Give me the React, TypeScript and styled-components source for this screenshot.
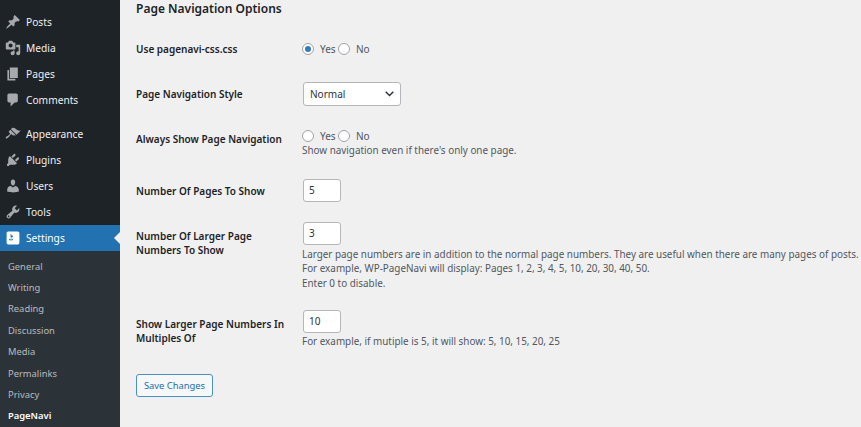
import styled, { createGlobalStyle } from 'styled-components';

const Global = createGlobalStyle`
  html, body { margin: 0; padding: 0; height: 100%; overflow: hidden; background: #f0f0f1; }
  body { font-family: "Noto Sans", "Open Sans", sans-serif; font-size: 10px; color: #3c434a; }
`;

const Page = styled.div`
  display: flex;
  width: 861px;
  height: 427px;
  overflow: hidden;
`;

const Sidebar = styled.nav`
  width: 120px;
  flex: none;
  background: #1d2327;
  padding-top: 9px;
  box-sizing: border-box;
`;

const MenuItem = styled.div<{ $active?: boolean; $gap?: boolean }>`
  position: relative;
  display: flex;
  align-items: center;
  height: 26px;
  margin-top: ${p => (p.$gap ? '8px' : '0')};
  padding-left: 5px;
  color: ${p => (p.$active ? '#fff' : '#f0f0f1')};
  background: ${p => (p.$active ? '#2271b1' : 'transparent')};
  font-size: 10.2px;
  line-height: 24px;

  svg {
    width: 16px;
    height: 16px;
    margin-right: 5px;
    fill: ${p => (p.$active ? '#fff' : '#a7aaad')};
  }
`;

const ActiveArrow = styled.span`
  position: absolute;
  right: 0;
  top: 7px;
  border: 6px solid transparent;
  border-right-color: #f0f0f1;
  border-left-width: 0;
`;

const SubMenu = styled.div`
  background: #2c3338;
  padding-top: 4.6px;
  height: 180px;
`;

const SubItem = styled.div<{ $current?: boolean }>`
  height: 21.4px;
  line-height: 21.4px;
  padding-left: 8px;
  font-size: 9.4px;
  color: ${p => (p.$current ? '#fff' : 'rgba(240, 246, 252, 0.7)')};
  font-weight: ${p => (p.$current ? 600 : 400)};
`;

const Content = styled.main`
  flex: 1;
  min-width: 0;
  padding-left: 16px;
`;

const Heading = styled.h2`
  margin: 0;
  height: 16px;
  line-height: 18px;
  font-size: 12px;
  font-weight: 600;
  color: #1d2327;
`;

const Row = styled.div<{ $top: number }>`
  display: grid;
  grid-template-columns: 166px 1fr;
  margin-top: ${p => p.$top}px;
`;

const Label = styled.div<{ $pad?: number }>`
  padding-top: ${p => p.$pad ?? 0}px;
  font-size: 10px;
  line-height: 14px;
  font-weight: 600;
  color: #1d2327;
  width: 153px;
`;

const Field = styled.div`
  min-width: 0;
  white-space: nowrap;
`;

const RadioLine = styled.div`
  display: flex;
  align-items: center;
  height: 14px;
`;

const Radio = styled.span<{ $checked?: boolean }>`
  width: 12px;
  height: 12px;
  flex: none;
  box-sizing: border-box;
  border: 1px solid #a0a3a7;
  border-radius: 50%;
  background: #fff;
  margin-right: 6px;
  display: flex;
  align-items: center;
  justify-content: center;

  &::after {
    content: '';
    display: ${p => (p.$checked ? 'block' : 'none')};
    width: 6px;
    height: 6px;
    border-radius: 50%;
    background: #2f7dbd;
  }
`;

const RadioText = styled.span<{ $w: number }>`
  width: ${p => p.$w}px;
  color: #50575e;
`;

const Select = styled.div`
  display: flex;
  align-items: center;
  justify-content: space-between;
  box-sizing: border-box;
  width: 98px;
  height: 24px;
  margin-left: 1px;
  padding: 0 6px 0 6px;
  background: #fff;
  border: 1px solid #b4b6b9;
  border-radius: 3px;
  color: #2c3338;

  svg {
    width: 9px;
    height: 6px;
  }
`;

const NumberBox = styled.div`
  box-sizing: border-box;
  width: 38px;
  height: 23px;
  margin-left: 1px;
  padding-left: 5px;
  line-height: 21px;
  background: #fff;
  border: 1px solid #b4b6b9;
  border-radius: 3px;
  color: #2c3338;
`;

const Help = styled.div<{ $top?: number }>`
  margin-top: ${p => p.$top ?? 0}px;
  font-size: 9.9px;
  line-height: 14.7px;
  color: #50575e;
`;

const SaveButton = styled.button`
  display: block;
  box-sizing: border-box;
  width: 77px;
  height: 23px;
  margin-top: 25px;
  padding: 0;
  font: inherit;
  font-size: 9.4px;
  color: #2271b1;
  background: #f6f7f7;
  border: 1px solid #4a90c6;
  border-radius: 3px;
`;

const icons: Record<string, string> = {
  posts: 'M10.44 3.02l1.82-1.82 6.36 6.35-1.83 1.82c-1.05-.68-2.48-.57-3.41.36l-.75.75c-.92.93-1.04 2.35-.35 3.41l-1.83 1.82-2.41-2.41-2.8 2.79c-.42.42-3.38 2.71-3.8 2.29s1.86-3.39 2.28-3.81l2.79-2.79L4.1 9.36l1.83-1.82c1.05.69 2.48.57 3.4-.36l.75-.75c.93-.92 1.05-2.35.36-3.41z',
  media: 'M13 11V4c0-.55-.45-1-1-1h-1.67L9 1H5L3.67 3H2c-.55 0-1 .45-1 1v7c0 .55.45 1 1 1h10c.55 0 1-.45 1-1zM7 4.5c1.38 0 2.5 1.12 2.5 2.5S8.38 9.5 7 9.5 4.5 8.38 4.5 7 5.62 4.5 7 4.5zM14 6h5v10.5c0 1.38-1.12 2.5-2.5 2.5S14 17.88 14 16.5s1.12-2.5 2.5-2.5c.17 0 .34.02.5.05V9h-3V6zm-4 8.05V13h2v3.5c0 1.38-1.12 2.5-2.5 2.5S7 17.88 7 16.5 8.12 14 9.5 14c.17 0 .34.02.5.05z',
  pages: 'M6 15V2h10v13H6zm-1 1h8v2H3V5h2v11z',
  comments: 'M5 2h9c1.1 0 2 .9 2 2v7c0 1.1-.9 2-2 2h-2l-5 5v-5H5c-1.1 0-2-.9-2-2V4c0-1.1.9-2 2-2z',
  appearance: 'M14.48 11.06L7.41 3.99l1.5-1.5c.5-.56 2.3-.47 3.51.32 1.21.8 1.43 1.28 2.91 2.1 1.18.64 2.45 1.26 4.45.85zm-.71.71L6.7 4.7 4.93 6.47c-.39.39-.39 1.02 0 1.41l1.06 1.06c.39.39.39 1.03 0 1.42-.6.6-1.43 1.11-2.21 1.69-.35.26-.7.53-1.01.84C1.43 13.23.4 14.75 1.1 15.45s2.22-.33 3.56-1.67c.31-.31.58-.66.84-1.01.58-.78 1.09-1.61 1.69-2.21.39-.39 1.03-.39 1.42 0l1.06 1.06c.39.39 1.02.39 1.41 0z',
  plugins: 'M13.11 4.36L9.87 7.6 8 5.73l3.24-3.24c.35-.34 1.05-.2 1.56.32.52.51.66 1.21.31 1.55zm-8 1.77l.91-1.12 9.01 9.01-1.19.84c-.71.71-2.63 1.16-3.82 1.16H6.14L4.9 17.26c-.59.59-1.54.59-2.12 0-.59-.58-.59-1.53 0-2.12l1.24-1.24v-3.88c0-1.13.4-3.19 1.09-3.89zm7.26 3.97l3.24-3.24c.34-.35 1.04-.21 1.55.31.52.51.66 1.21.31 1.55l-3.24 3.25z',
  users: 'M10 9.25c-2.27 0-2.73-3.44-2.73-3.44C7 4.02 7.82 2 9.97 2c2.16 0 2.98 2.02 2.71 3.81 0 0-.41 3.44-2.68 3.44zm0 2.57L12.72 10c2.39 0 4.52 2.33 4.52 4.53v2.49s-3.65 1.13-7.24 1.13c-3.65 0-7.24-1.13-7.24-1.13v-2.49c0-2.25 1.94-4.48 4.47-4.48z',
  tools: 'M16.68 9.77c-1.34 1.34-3.3 1.67-4.95.99l-5.41 6.52c-.99.99-2.59.99-3.58 0s-.99-2.59 0-3.57l6.52-5.42c-.68-1.65-.35-3.61.99-4.95 1.28-1.28 3.12-1.62 4.72-1.06l-2.89 2.89 2.82 2.82 2.86-2.87c.53 1.58.18 3.39-1.08 4.65zM3.81 16.21c.4.39 1.04.39 1.43 0 .4-.4.4-1.04 0-1.43-.39-.4-1.03-.4-1.43 0-.39.39-.39 1.03 0 1.43z',
  settings: 'M18 16V4c0-1.1-.9-2-2-2H4c-1.1 0-2 .9-2 2v12c0 1.1.9 2 2 2h12c1.1 0 2-.9 2-2zM8 11h1c.55 0 1 .45 1 1s-.45 1-1 1H8v1.5c0 .28-.22.5-.5.5s-.5-.22-.5-.5V13H6c-.55 0-1-.45-1-1s.45-1 1-1h1V5.5c0-.28.22-.5.5-.5s.5.22.5.5V7h1c.55 0 1 .45 1 1s-.45 1-1 1h-1v5.5c0 .28-.22.5-.5.5s-.5-.22-.5-.5V9z',
};

function Icon({ name }: { name: string }) {
  return (
    <svg viewBox="0 0 20 20">
      <path d={icons[name]} />
    </svg>
  );
}

function YesNo({ yes }: { yes?: boolean }) {
  return (
    <RadioLine>
      <Radio $checked={yes} />
      <RadioText $w={18}>Yes</RadioText>
      <Radio />
      <RadioText $w={20}>No</RadioText>
    </RadioLine>
  );
}

const subItems = ['General', 'Writing', 'Reading', 'Discussion', 'Media', 'Permalinks', 'Privacy'];

export default function App() {
  return (
    <Page>
      <Global />
      <Sidebar>
        <MenuItem><Icon name="posts" />Posts</MenuItem>
        <MenuItem><Icon name="media" />Media</MenuItem>
        <MenuItem><Icon name="pages" />Pages</MenuItem>
        <MenuItem><Icon name="comments" />Comments</MenuItem>
        <MenuItem $gap><Icon name="appearance" />Appearance</MenuItem>
        <MenuItem><Icon name="plugins" />Plugins</MenuItem>
        <MenuItem><Icon name="users" />Users</MenuItem>
        <MenuItem><Icon name="tools" />Tools</MenuItem>
        <MenuItem $active><Icon name="settings" />Settings<ActiveArrow /></MenuItem>
        <SubMenu>
          {subItems.map(s => <SubItem key={s}>{s}</SubItem>)}
          <SubItem $current>PageNavi</SubItem>
        </SubMenu>
      </Sidebar>
      <Content>
        <Heading>Page Navigation Options</Heading>
        <Row $top={26}>
          <Label>Use pagenavi-css.css</Label>
          <Field><YesNo yes /></Field>
        </Row>
        <Row $top={26}>
          <Label $pad={5}>Page Navigation Style</Label>
          <Field>
            <Select>
              Normal
              <svg viewBox="0 0 9 6"><path d="M.7.8L4.5 4.6 8.3.8" fill="none" stroke="#2c3338" strokeWidth="1.4" /></svg>
            </Select>
          </Field>
        </Row>
        <Row $top={23}>
          <Label $pad={3}>Always Show Page Navigation</Label>
          <Field>
            <YesNo />
            <Help>Show navigation even if there's only one page.</Help>
          </Field>
        </Row>
        <Row $top={21}>
          <Label $pad={5}>Number Of Pages To Show</Label>
          <Field><NumberBox>5</NumberBox></Field>
        </Row>
        <Row $top={20}>
          <Label $pad={7}>Number Of Larger Page Numbers To Show</Label>
          <Field>
            <NumberBox>3</NumberBox>
            <Help $top={2}>
              Larger page numbers are in addition to the normal page numbers. They are useful when there are many pages of posts.<br />
              For example, WP-PageNavi will display: Pages 1, 2, 3, 4, 5, 10, 20, 30, 40, 50.<br />
              Enter 0 to disable.
            </Help>
          </Field>
        </Row>
        <Row $top={19}>
          <Label $pad={7}>Show Larger Page Numbers In Multiples Of</Label>
          <Field>
            <NumberBox>10</NumberBox>
            <Help $top={1}>For example, if mutiple is 5, it will show: 5, 10, 15, 20, 25</Help>
          </Field>
        </Row>
        <SaveButton>Save Changes</SaveButton>
      </Content>
    </Page>
  );
}
